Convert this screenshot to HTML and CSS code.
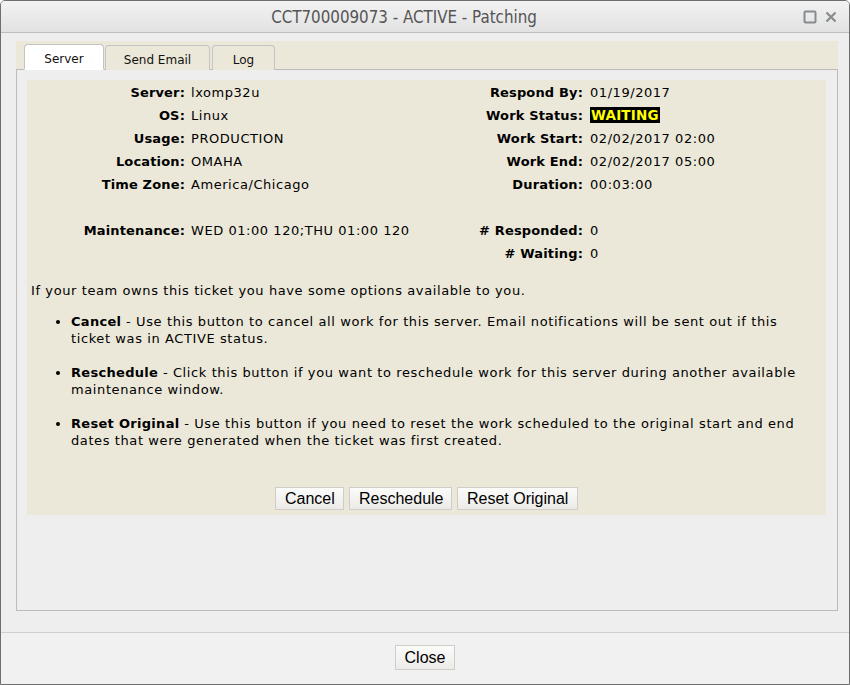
FILE: index.html
```html
<!DOCTYPE html>
<html>
<head>
<meta charset="utf-8">
<link rel="stylesheet" href="styles.css">
</head>
<body>
<div class="window">
  <div class="titlebar">
    <div class="title">CCT700009073 - ACTIVE - Patching</div>
    <div class="winbtns">
      <svg width="14" height="14" viewBox="0 0 14 14"><rect x="1.5" y="1.5" width="11" height="11" rx="1" fill="none" stroke="#868b8e" stroke-width="2"/></svg>
      <svg width="12" height="14" viewBox="0 0 12 14"><path d="M1.5 2.5L10.5 11.5M10.5 2.5L1.5 11.5" stroke="#868b8e" stroke-width="2.2" fill="none"/></svg>
    </div>
  </div>
  <div class="body">
    <div class="tabs">
      <div class="tab active">Server</div>
      <div class="tab">Send Email</div>
      <div class="tab">Log</div>
    </div>
    <div class="panel">
      <div class="inner">
        <div class="info">
          <div class="lbl">Server:</div><div class="val">lxomp32u</div>
          <div class="lbl">Respond By:</div><div class="val">01/19/2017</div>
          <div class="lbl">OS:</div><div class="val">Linux</div>
          <div class="lbl">Work Status:</div><div class="val"><span class="status">WAITING</span></div>
          <div class="lbl">Usage:</div><div class="val">PRODUCTION</div>
          <div class="lbl">Work Start:</div><div class="val">02/02/2017 02:00</div>
          <div class="lbl">Location:</div><div class="val">OMAHA</div>
          <div class="lbl">Work End:</div><div class="val">02/02/2017 05:00</div>
          <div class="lbl">Time Zone:</div><div class="val">America/Chicago</div>
          <div class="lbl">Duration:</div><div class="val">00:03:00</div>
          <div class="lbl"></div><div class="val"></div>
          <div class="lbl"></div><div class="val"></div>
          <div class="lbl">Maintenance:</div><div class="val">WED 01:00 120;THU 01:00 120</div>
          <div class="lbl"># Responded:</div><div class="val">0</div>
          <div class="lbl"></div><div class="val"></div>
          <div class="lbl"># Waiting:</div><div class="val">0</div>
        </div>
        <p class="intro">If your team owns this ticket you have some options available to you.</p>
        <ul class="opts">
          <li><b>Cancel</b> - Use this button to cancel all work for this server. Email notifications will be sent out if this ticket was in ACTIVE status.</li>
          <li><b>Reschedule</b> - Click this button if you want to reschedule work for this server during another available maintenance window.</li>
          <li><b>Reset Original</b> - Use this button if you need to reset the work scheduled to the original start and end dates that were generated when the ticket was first created.</li>
        </ul>
        <div class="actions">
          <button class="btn">Cancel</button>
          <button class="btn">Reschedule</button>
          <button class="btn">Reset Original</button>
        </div>
      </div>
    </div>
  </div>
  <div class="footer">
    <button class="btn close">Close</button>
  </div>
</div>
</body>
</html>
```

FILE: styles.css
```css
* { box-sizing: border-box; }
html, body { margin: 0; padding: 0; }
body {
  width: 850px;
  height: 685px;
  overflow: hidden;
  background: #ffffff;
  font-family: "DejaVu Sans", sans-serif;
  font-size: 13px;
  color: #000;
}
.window {
  width: 850px;
  height: 685px;
  border: 1px solid #6e6e6e;
  border-radius: 5px 5px 0 0;
  background: #eeeeee;
  display: flex;
  flex-direction: column;
  overflow: hidden;
}
.titlebar {
  height: 32px;
  flex: none;
  background: linear-gradient(#f2f2f2, #e2e2e2);
  border-bottom: 1px solid #bdbdbd;
  display: flex;
  align-items: center;
  justify-content: center;
  padding-right: 42px;
  position: relative;
}
.title {
  font-family: "DejaVu Sans Condensed", "DejaVu Sans", sans-serif;
  font-stretch: condensed;
  font-size: 16.8px;
  color: #555;
  padding-top: 1px;
}
.winbtns {
  position: absolute;
  right: 12px;
  top: 9px;
  display: flex;
  gap: 8px;
}
.body {
  flex: 1;
  padding: 8px 11px 21px 15px;
  display: flex;
  flex-direction: column;
}
.tabs {
  height: 29px;
  flex: none;
  background: #ebe8d9;
  display: flex;
  align-items: flex-end;
  padding-left: 8px;
  gap: 1px;
  border-bottom: 1px solid #bcbcbc;
}
.tab {
  height: 25px;
  margin-bottom: -1px;
  border: 1px solid #c4c4c4;
  border-bottom: none;
  border-radius: 4px 4px 0 0;
  background: #ebe8d9;
  font-size: 12px;
  display: flex;
  align-items: center;
  justify-content: center;
  padding-top: 3px;
  color: #111;
}
.tab:nth-child(1) { width: 80px; }
.tab:nth-child(2) { width: 105px; }
.tab:nth-child(3) { width: 63px; margin-left: 1px; }
.tab.active { background: #ffffff; border-bottom: 1px solid #fff; height: 26px; }
.panel {
  flex: 1;
  border: 1px solid #bcbcbc;
  border-top: none;
  padding: 10px 11px 10px 10px;
}
.inner {
  background: #ebe8d9;
  padding: 1px 16px 5px 0;
  letter-spacing: 0.6px;
}
.info {
  display: grid;
  grid-template-columns: 158px 278px 108px 1fr;
  column-gap: 6px;
  grid-auto-rows: 23px;
  line-height: 23px;
}
.lbl {
  text-align: right;
  font-weight: bold;
  white-space: nowrap;
  letter-spacing: 0.15px;
}
.val { white-space: nowrap; letter-spacing: 0.55px; }
.info .val:nth-child(4n) { padding-left: 1px; }
.status {
  background: #000;
  color: #ffff00;
  font-weight: bold;
  padding: 0 1px;
  font-size: 13.5px;
  letter-spacing: 0.2px;
}
.intro {
  margin: 17px 0 0 4px;
  line-height: 17px;
}
.opts {
  margin: 14px 0 0 0;
  padding-left: 44px;
  line-height: 17px;
}
.opts b { letter-spacing: 0.3px; }
.opts li { margin-bottom: 17px; }
.opts li:last-child { margin-bottom: 0; }
.actions {
  margin-top: 38px;
  display: flex;
  justify-content: center;
  gap: 5px;
  padding-left: 16px;
  letter-spacing: 0;
}
.btn {
  font-family: "Liberation Sans", Arial, sans-serif;
  font-size: 16px;
  color: #000;
  height: 23px;
  padding: 0 9px;
  background: linear-gradient(#fbfbfa, #ecebe8);
  border: 1px solid #cfcdc8;
  border-radius: 0;
  line-height: 21px;
  white-space: nowrap;
  letter-spacing: 0;
}
.actions .btn:nth-child(1) { width: 69px; }
.actions .btn:nth-child(2) { width: 103px; }
.actions .btn:nth-child(3) { width: 121px; }
.footer {
  height: 52px;
  flex: none;
  border-top: 1px solid #d0d0d0;
  background: #f1f1f1;
  display: flex;
  justify-content: center;
  padding-top: 12px;
}
.btn.close {
  width: 60px;
  height: 25px;
  font-family: "Liberation Sans Narrow", "Liberation Sans", Arial, sans-serif;
  font-stretch: condensed;
  padding: 0;
}
```
